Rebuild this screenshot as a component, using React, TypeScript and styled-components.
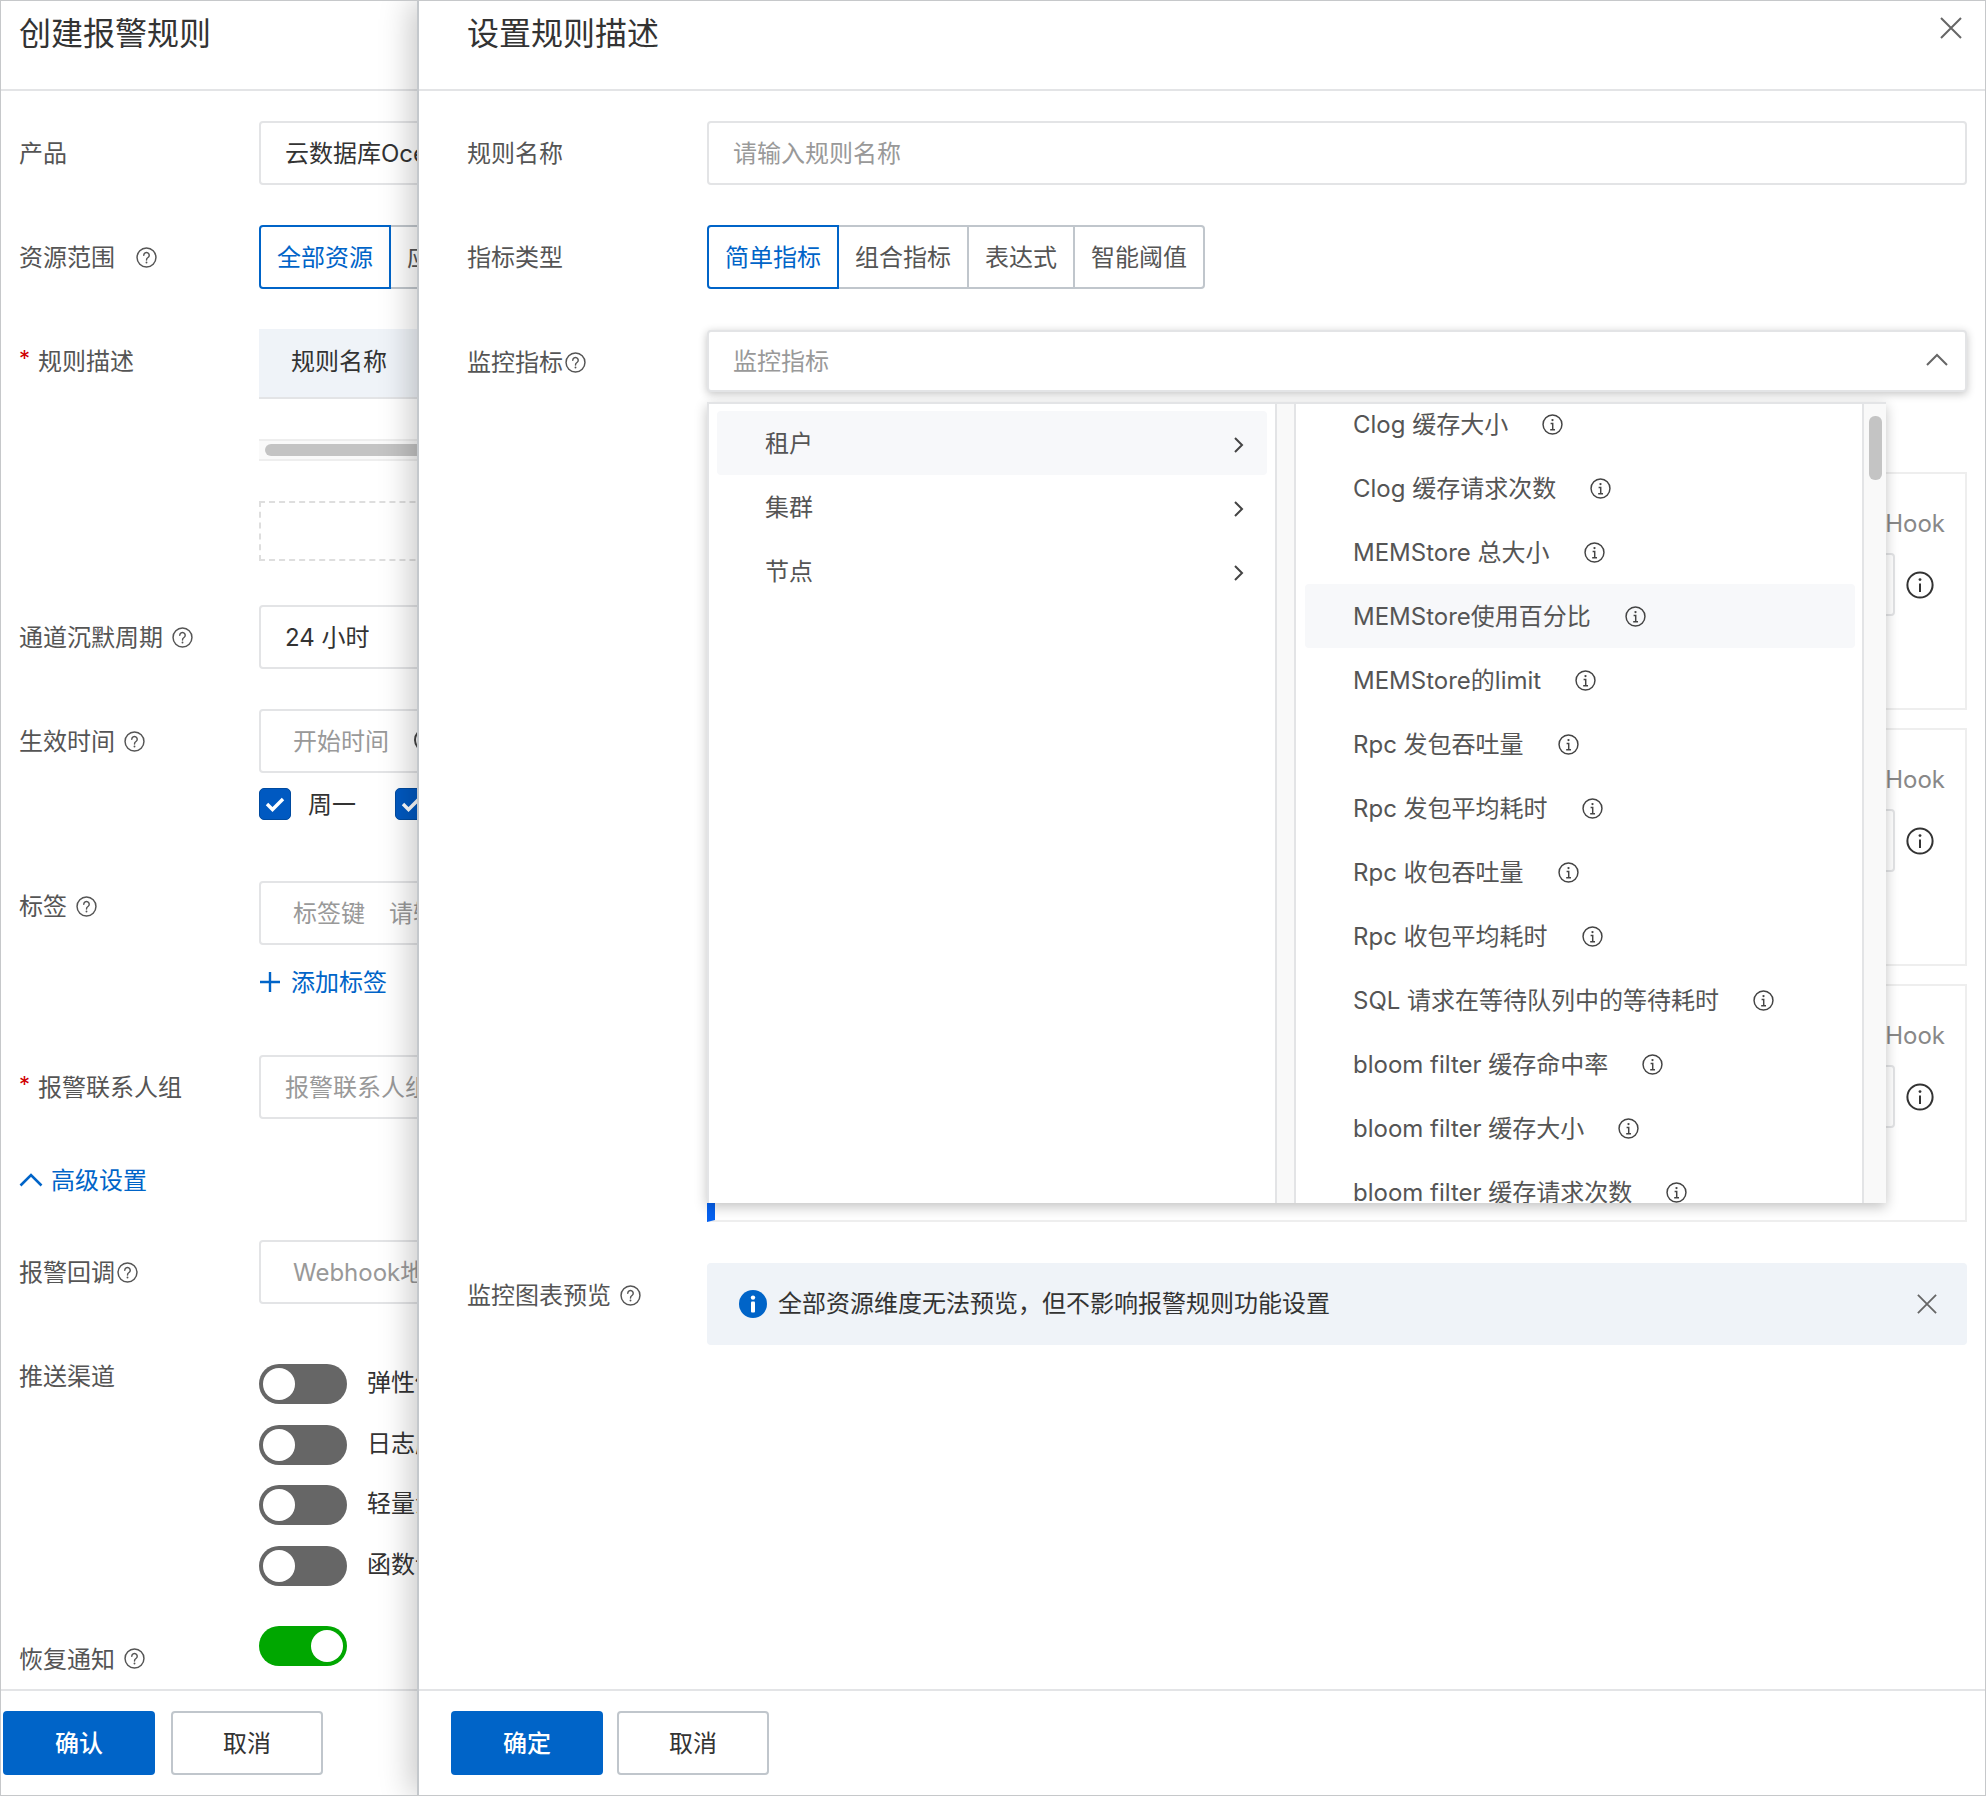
import styled, { createGlobalStyle } from "styled-components";

const GlobalStyle = createGlobalStyle`
  html, body {
    margin: 0;
    padding: 0;
    background: #fff;
  }
  body {
    font-family: Inter, "Noto Sans CJK SC", sans-serif;
    font-size: 24px;
    color: #333;
  }
  * {
    box-sizing: border-box;
  }
`;

const metrics = [
  "Clog 缓存大小",
  "Clog 缓存请求次数",
  "MEMStore 总大小",
  "MEMStore使用百分比",
  "MEMStore的limit",
  "Rpc 发包吞吐量",
  "Rpc 发包平均耗时",
  "Rpc 收包吞吐量",
  "Rpc 收包平均耗时",
  "SQL 请求在等待队列中的等待耗时",
  "bloom filter 缓存命中率",
  "bloom filter 缓存大小",
  "bloom filter 缓存请求次数",
];

const HelpIcon = () => (
  <HelpSvg viewBox="0 0 20 20" fill="none" stroke="#555" strokeWidth="1.4">
    <circle cx="10" cy="10" r="9" />
    <path d="M7.4 7.8a2.6 2.6 0 1 1 4 2.2c-.9.6-1.4 1.1-1.4 2.3" strokeLinecap="round" />
    <circle cx="10" cy="14.8" r=".9" fill="#555" stroke="none" />
  </HelpSvg>
);

const SmallInfo = () => (
  <InfoSvg viewBox="0 0 20 20" fill="none" stroke="#444" strokeWidth="1.4">
    <circle cx="10" cy="10" r="9" />
    <circle cx="10" cy="5.8" r="1.1" fill="#444" stroke="none" />
    <path d="M8.2 9h2v6M7.8 15h4.6" />
  </InfoSvg>
);

const BigInfo = () => (
  <BigInfoSvg viewBox="0 0 28 28" fill="none" stroke="#333" strokeWidth="2">
    <circle cx="14" cy="14" r="12.6" />
    <circle cx="14" cy="8.6" r="1.4" fill="#333" stroke="none" />
    <path d="M14 12.5v8.5" />
  </BigInfoSvg>
);

const Chevron = () => (
  <ChevronSvg viewBox="0 0 12 18" fill="none" stroke="#444" strokeWidth="2">
    <path d="M2 2l7 7-7 7" />
  </ChevronSvg>
);

const CloseIcon = ({ size }: { size: number }) => (
  <svg width={size} height={size} viewBox="0 0 22 22" fill="none" stroke="#666" strokeWidth="2">
    <path d="M1 1l20 20M21 1L1 21" />
  </svg>
);

const Help = ({ gap = 9 }: { gap?: number }) => (
  <HelpWrap $gap={gap}>
    <HelpIcon />
  </HelpWrap>
);

const Switch = ({ on = false }: { on?: boolean }) => (
  <Toggle $on={on}>
    <Knob />
  </Toggle>
);

const Tick = () => (
  <svg width="20" height="16" viewBox="0 0 20 16" fill="none" stroke="#fff" strokeWidth="3.4">
    <path d="M2 8l5.5 5.5L18 3" />
  </svg>
);

const App = () => {
  return (
    <Frame>
      <GlobalStyle />
      <LeftPanel>
        <Header>
          <Title>创建报警规则</Title>
        </Header>
        <Body>
          <LeftRow $mt={30}>
            <Label>产品</Label>
            <Control>
              <Input $pl={24}>云数据库OceanBase</Input>
            </Control>
          </LeftRow>
          <LeftRow $mt={40}>
            <Label>
              资源范围
              <Help gap={21} />
            </Label>
            <Control>
              <Segments>
                <Segment $active>全部资源</Segment>
                <Segment>应用分组</Segment>
              </Segments>
            </Control>
          </LeftRow>
          <LeftRow $mt={40}>
            <Label>
              <Star>*</Star>规则描述
            </Label>
            <Control>
              <RuleTab>规则名称</RuleTab>
              <HScroll>
                <HThumb />
              </HScroll>
              <DashedBox />
            </Control>
          </LeftRow>
          <LeftRow $mt={44}>
            <Label>
              通道沉默周期
              <Help />
            </Label>
            <Control>
              <Input $pl={24}>24 小时</Input>
            </Control>
          </LeftRow>
          <LeftRow $mt={40}>
            <Label>
              生效时间
              <Help />
            </Label>
            <Control>
              <Input $pl={32} $muted>
                开始时间
                <Clock />
              </Input>
              <Days>
                <Day>
                  <CheckBox>
                    <Tick />
                  </CheckBox>
                  <Lift>周一</Lift>
                </Day>
                <Day>
                  <CheckBox>
                    <Tick />
                  </CheckBox>
                  <Lift>周二</Lift>
                </Day>
              </Days>
            </Control>
          </LeftRow>
          <LeftRow $mt={61}>
            <Label $lh={50}>
              标签
              <Help />
            </Label>
            <Control>
              <Input $pl={32} $muted>
                <TagKey>标签键</TagKey>请输入标签值
              </Input>
              <AddLink>
                <svg width="22" height="22" viewBox="0 0 22 22" fill="none" stroke="#0064c8" strokeWidth="2.4">
                  <path d="M11 1v20M1 11h20" />
                </svg>
                <Lift>添加标签</Lift>
              </AddLink>
            </Control>
          </LeftRow>
          <LeftRow $mt={57}>
            <Label>
              <Star>*</Star>报警联系人组
            </Label>
            <Control>
              <Input $pl={24} $muted>
                报警联系人组
              </Input>
            </Control>
          </LeftRow>
          <Advanced>
            <svg width="24" height="14" viewBox="0 0 24 14" fill="none" stroke="#0064c8" strokeWidth="2.6">
              <path d="M1.5 12.5L12 2l10.5 10.5" />
            </svg>
            <Lift>高级设置</Lift>
          </Advanced>
          <LeftRow $mt={44}>
            <Label>
              报警回调
              <Help gap={2} />
            </Label>
            <Control>
              <Input $pl={32} $muted>
                Webhook地址
              </Input>
            </Control>
          </LeftRow>
          <LeftRow $mt={60}>
            <Label $lh={24}>推送渠道</Label>
            <Control>
              <Channels>
                <Channel>
                  <Switch />
                  <ChannelName>弹性伸缩</ChannelName>
                </Channel>
                <Channel>
                  <Switch />
                  <ChannelName>日志服务</ChannelName>
                </Channel>
                <Channel>
                  <Switch />
                  <ChannelName>轻量消息队列</ChannelName>
                </Channel>
                <Channel>
                  <Switch />
                  <ChannelName>函数计算</ChannelName>
                </Channel>
              </Channels>
            </Control>
          </LeftRow>
          <LeftRow $mt={40}>
            <Label $lh={66}>
              恢复通知
              <Help />
            </Label>
            <Control>
              <Switch on />
            </Control>
          </LeftRow>
        </Body>
        <Footer $pl={2} $gap={16}>
          <PrimaryButton>确认</PrimaryButton>
          <SecondaryButton>取消</SecondaryButton>
        </Footer>
      </LeftPanel>

      <RightPanel>
        <Header $pl={48}>
          <Title>设置规则描述</Title>
          <TopClose>
            <CloseIcon size={22} />
          </TopClose>
        </Header>
        <Body>
          <RightRow $mt={30}>
            <Label>规则名称</Label>
            <Control>
              <Input $pl={24} $muted>
                请输入规则名称
              </Input>
            </Control>
          </RightRow>
          <RightRow $mt={40}>
            <Label>指标类型</Label>
            <Control>
              <Segments>
                <Segment $active>简单指标</Segment>
                <Segment>组合指标</Segment>
                <Segment>表达式</Segment>
                <Segment>智能阈值</Segment>
              </Segments>
            </Control>
          </RightRow>
          <RightRow $mt={41}>
            <Label>
              监控指标
              <Help gap={2} />
            </Label>
            <Control>
              <SelectWrap>
                <Select>
                  监控指标
                  <svg width="22" height="13" viewBox="0 0 22 13" fill="none" stroke="#666" strokeWidth="2">
                    <path d="M1 12L11 2l10 10" />
                  </svg>
                </Select>
                <Dropdown>
                  <Categories>
                    <Category $active>
                      <Lift>租户</Lift>
                      <Chevron />
                    </Category>
                    <Category>
                      <Lift>集群</Lift>
                      <Chevron />
                    </Category>
                    <Category>
                      <Lift>节点</Lift>
                      <Chevron />
                    </Category>
                  </Categories>
                  <ColumnGap />
                  <MetricList>
                    {metrics.map((name, i) => (
                      <Metric key={name} $active={i === 3}>
                        <Lift>{name}</Lift>
                        <SmallInfo />
                      </Metric>
                    ))}
                  </MetricList>
                  <VScroll>
                    <VThumb />
                  </VScroll>
                </Dropdown>
              </SelectWrap>
              <Cards>
                <Card>
                  <CardTitle>Hook</CardTitle>
                  <CardBody>
                    <CardInput />
                    <BigInfo />
                  </CardBody>
                </Card>
                <Card>
                  <CardTitle>Hook</CardTitle>
                  <CardBody>
                    <CardInput />
                    <BigInfo />
                  </CardBody>
                </Card>
                <Card $active>
                  <CardTitle>Hook</CardTitle>
                  <CardBody>
                    <CardInput />
                    <BigInfo />
                  </CardBody>
                </Card>
              </Cards>
            </Control>
          </RightRow>
          <RightRow $mt={41}>
            <Label>
              监控图表预览
              <Help />
            </Label>
            <Control>
              <Alert>
                <svg width="28" height="28" viewBox="0 0 28 28">
                  <circle cx="14" cy="14" r="14" fill="#0064c8" />
                  <circle cx="14" cy="7.6" r="2.2" fill="#fff" />
                  <rect x="12" y="11.5" width="4" height="11" rx="1" fill="#fff" />
                </svg>
                <AlertText>全部资源维度无法预览，但不影响报警规则功能设置</AlertText>
                <CloseIcon size={20} />
              </Alert>
            </Control>
          </RightRow>
        </Body>
        <Footer $pl={32} $gap={14}>
          <PrimaryButton>确定</PrimaryButton>
          <SecondaryButton>取消</SecondaryButton>
        </Footer>
      </RightPanel>
    </Frame>
  );
};

const Frame = styled.div`
  display: flex;
  width: 1986px;
  height: 1796px;
  border: 1px solid #c6c8ca;
  overflow: hidden;
  background: #fff;
`;

const LeftPanel = styled.section`
  display: flex;
  flex-direction: column;
  flex: 0 0 416px;
  width: 416px;
  overflow: hidden;
`;

const RightPanel = styled.section`
  position: relative;
  z-index: 2;
  display: flex;
  flex-direction: column;
  flex: 1;
  min-width: 0;
  background: #fff;
  border-left: 2px solid #c4c8cc;
  box-shadow: -6px 0 30px rgba(0, 0, 0, 0.22);
`;

const Header = styled.header<{ $pl?: number }>`
  position: relative;
  flex: 0 0 90px;
  padding-left: ${(p) => p.$pl ?? 18}px;
  border-bottom: 2px solid #e3e4e6;
`;

const Title = styled.h1`
  margin: 0;
  font-size: 32px;
  font-weight: 400;
  line-height: 66px;
  color: #333;
  white-space: nowrap;
`;

const TopClose = styled.span`
  position: absolute;
  top: 16px;
  right: 23px;
  display: flex;
`;

const Body = styled.div`
  flex: 1;
  min-height: 0;
  overflow: hidden;
`;

const LeftRow = styled.div<{ $mt: number }>`
  display: flex;
  margin-top: ${(p) => p.$mt}px;
  padding-left: 18px;
`;

const RightRow = styled.div<{ $mt: number }>`
  display: flex;
  margin-top: ${(p) => p.$mt}px;
  padding: 0 18px 0 48px;
`;

const Label = styled.div<{ $lh?: number }>`
  display: flex;
  align-items: center;
  flex: 0 0 240px;
  height: ${(p) => p.$lh ?? 64}px;
  padding-bottom: 3px;
  color: #555;
  white-space: nowrap;
`;

const Lift = styled.span`
  padding-bottom: 4px;
  white-space: nowrap;
`;

const Star = styled.span`
  width: 19px;
  color: #d00000;
  font-size: 22px;
  position: relative;
  top: -2px;
`;

const HelpWrap = styled.span<{ $gap: number }>`
  display: inline-flex;
  margin: 3px 0 0 ${(p) => p.$gap}px;
`;

const HelpSvg = styled.svg`
  width: 21px;
  height: 21px;
`;

const Control = styled.div`
  flex: 1 0 auto;
  min-width: 0;
  width: 1260px;
`;

const Input = styled.div<{ $pl: number; $muted?: boolean }>`
  display: flex;
  align-items: center;
  height: 64px;
  padding-left: ${(p) => p.$pl}px;
  padding-bottom: 3px;
  border: 2px solid #e3e4e6;
  border-radius: 4px;
  color: ${(p) => (p.$muted ? "#999" : "#333")};
  white-space: nowrap;
`;

const Clock = styled.span`
  width: 24px;
  height: 24px;
  margin-left: 25px;
  border: 2.4px solid #444;
  border-radius: 50%;
`;

const TagKey = styled.span`
  margin-right: 24px;
`;

const Segments = styled.div`
  display: flex;
`;

const Segment = styled.div<{ $active?: boolean }>`
  height: 64px;
  padding: 0 16px;
  line-height: 61px;
  white-space: nowrap;
  border: 2px solid ${(p) => (p.$active ? "#0064c8" : "#c0c6cc")};
  color: ${(p) => (p.$active ? "#0064c8" : "#555")};
  margin-left: -2px;
  position: relative;
  z-index: ${(p) => (p.$active ? 1 : 0)};
  &:first-child {
    margin-left: 0;
    border-radius: 4px 0 0 4px;
  }
  &:last-child:not(:first-child) {
    border-radius: 0 4px 4px 0;
  }
`;

const RuleTab = styled.div`
  height: 70px;
  padding-left: 32px;
  line-height: 66px;
  background: #eff3f8;
  border-bottom: 2px solid #e3e4e6;
  color: #333;
`;

const HScroll = styled.div`
  display: flex;
  align-items: center;
  height: 22px;
  margin-top: 40px;
  padding-left: 6px;
  background: #fafafa;
  border-top: 2px solid #eee;
  border-bottom: 2px solid #eee;
`;

const HThumb = styled.div`
  width: 400px;
  height: 12px;
  border-radius: 6px;
  background: #c4c4c4;
`;

const DashedBox = styled.div`
  height: 60px;
  margin-top: 40px;
  border: 2px dashed #dedede;
`;

const Days = styled.div`
  display: flex;
  gap: 39px;
  margin-top: 15px;
`;

const Day = styled.label`
  display: flex;
  align-items: center;
  gap: 17px;
  height: 32px;
  color: #333;
`;

const CheckBox = styled.span`
  display: flex;
  align-items: center;
  justify-content: center;
  width: 32px;
  height: 32px;
  border-radius: 5px;
  background: #0059c1;
  border: 1px solid #004a9f;
`;

const AddLink = styled.div`
  display: flex;
  align-items: center;
  gap: 10px;
  height: 32px;
  margin-top: 21px;
  color: #0064c8;
`;

const Advanced = styled.div`
  display: flex;
  align-items: center;
  gap: 8px;
  height: 32px;
  margin-top: 45px;
  padding-left: 18px;
  color: #0064c8;
`;

const Channels = styled.div`
  display: flex;
  flex-direction: column;
  gap: 20.5px;
`;

const Channel = styled.div`
  display: flex;
  align-items: center;
  gap: 20px;
  height: 40px;
  color: #333;
`;

const ChannelName = styled.span`
  padding-bottom: 7px;
  white-space: nowrap;
`;

const Toggle = styled.span<{ $on: boolean }>`
  display: flex;
  flex: none;
  justify-content: ${(p) => (p.$on ? "flex-end" : "flex-start")};
  align-items: center;
  width: 88px;
  height: 40px;
  padding: 0 4px;
  border-radius: 20px;
  background: ${(p) => (p.$on ? "#00a700" : "#666")};
`;

const Knob = styled.span`
  width: 32px;
  height: 32px;
  border-radius: 50%;
  background: #fff;
`;

const Footer = styled.footer<{ $pl: number; $gap: number }>`
  display: flex;
  flex: 0 0 106px;
  gap: ${(p) => p.$gap}px;
  padding: 20px 0 0 ${(p) => p.$pl}px;
  border-top: 2px solid #e3e4e6;
`;

const PrimaryButton = styled.button`
  width: 152px;
  height: 64px;
  padding: 0 0 3px;
  border: none;
  border-radius: 4px;
  background: #0064c8;
  color: #fff;
  font: 500 24px Inter, "Noto Sans CJK SC", sans-serif;
`;

const SecondaryButton = styled.button`
  width: 152px;
  height: 64px;
  padding: 0 0 3px;
  border: 2px solid #c0c6cc;
  border-radius: 4px;
  background: #fff;
  color: #333;
  font: 400 24px Inter, "Noto Sans CJK SC", sans-serif;
`;

const SelectWrap = styled.div`
  position: relative;
`;

const Select = styled.div`
  display: flex;
  align-items: center;
  justify-content: space-between;
  height: 62px;
  padding: 0 17px 3px 24px;
  border: 2px solid #e3e4e6;
  border-radius: 4px;
  color: #999;
  background: #fff;
  box-shadow: 0 2px 8px rgba(0, 0, 0, 0.24);
`;

const Dropdown = styled.div`
  position: absolute;
  z-index: 10;
  top: 72px;
  left: 0;
  display: flex;
  width: 1179px;
  height: 801px;
  overflow: hidden;
  background: #fff;
  border-top: 2px solid #e3e4e6;
  border-left: 2px solid #e3e4e6;
  box-shadow: 0 4px 12px rgba(0, 0, 0, 0.24);
`;

const Categories = styled.div`
  flex: 0 0 568px;
  padding: 7px 8px 0 8px;
  border-right: 2px solid #e3e4e6;
`;

const Category = styled.div<{ $active?: boolean }>`
  display: flex;
  align-items: center;
  justify-content: space-between;
  height: 64px;
  padding: 0 22px 0 48px;
  border-radius: 4px;
  color: #555;
  background: ${(p) => (p.$active ? "#f7f8fa" : "transparent")};
`;

const ChevronSvg = styled.svg`
  width: 12px;
  height: 18px;
  margin-top: 3px;
`;

const ColumnGap = styled.div`
  flex: 0 0 19px;
  background: #f9f9f9;
  border-right: 2px solid #e3e4e6;
`;

const MetricList = styled.div`
  flex: 0 0 568px;
  height: 100%;
  padding: 0 7px 0 9px;
  overflow: hidden;
  border-right: 2px solid #e3e4e6;
`;

const Metric = styled.div<{ $active?: boolean }>`
  display: flex;
  align-items: center;
  gap: 34px;
  height: 64px;
  padding-left: 48px;
  border-radius: 4px;
  color: #555;
  white-space: nowrap;
  background: ${(p) => (p.$active ? "#f7f8fa" : "transparent")};
  &:first-child {
    margin-top: -12px;
  }
`;

const InfoSvg = styled.svg`
  flex: none;
  width: 21px;
  height: 21px;
`;

const VScroll = styled.div`
  flex: 1;
  background: #f9f9f9;
  padding: 12px 4px 0 5px;
`;

const VThumb = styled.div`
  height: 64px;
  border-radius: 6px;
  background: #c4c4c4;
`;

const Cards = styled.div`
  display: flex;
  flex-direction: column;
  gap: 18px;
  margin-top: 80px;
`;

const Card = styled.div<{ $active?: boolean }>`
  position: relative;
  height: 238px;
  border: 2px solid #eee;
  ${(p) => (p.$active ? "border-left: 8px solid #0561f0;" : "")}
`;

const CardTitle = styled.div`
  padding: 34px 20px 0 0;
  line-height: 32px;
  text-align: right;
  color: #888;
`;

const CardBody = styled.div`
  display: flex;
  align-items: center;
  gap: 11px;
  margin-top: 13px;
  padding: 0 15px 0 16px;
`;

const CardInput = styled.div`
  flex: 1;
  height: 63px;
  border: 2px solid #e3e4e6;
  border-radius: 4px;
`;

const BigInfoSvg = styled.svg`
  width: 28px;
  height: 28px;
  margin: 0 16px 0 0;
`;

const Alert = styled.div`
  display: flex;
  align-items: center;
  gap: 11px;
  height: 82px;
  padding: 0 30px 0 32px;
  border-radius: 4px;
  background: #eff3f8;
`;

const AlertText = styled.span`
  flex: 1;
  padding-bottom: 6px;
  color: #333;
`;

export default App;
